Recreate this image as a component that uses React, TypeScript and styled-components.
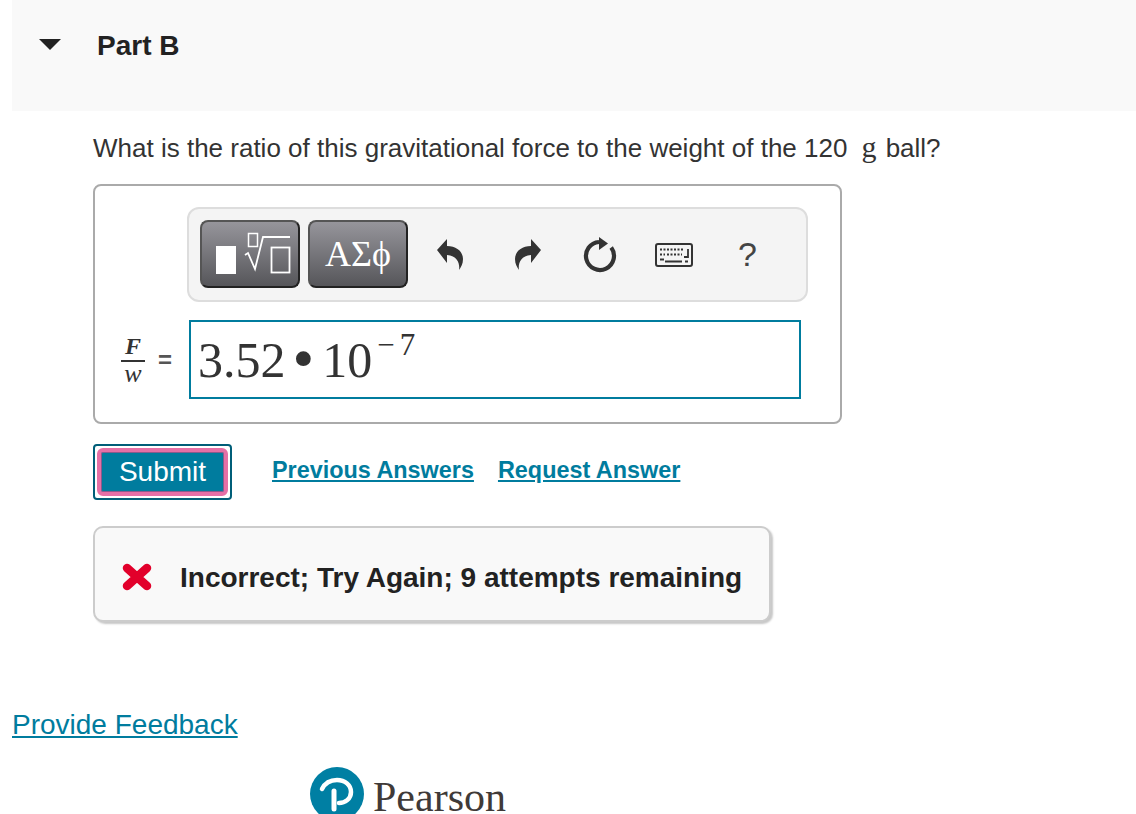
import styled, { createGlobalStyle } from 'styled-components'

const GlobalStyle = createGlobalStyle`
  html, body {
    margin: 0;
    padding: 0;
    background: #fff;
  }
  body {
    font-family: 'Liberation Sans', Arial, sans-serif;
    color: #333;
  }
`

const Page = styled.div`
  width: 1136px;
  height: 814px;
  overflow: hidden;
  box-sizing: border-box;
  padding-left: 12px;
`

const PartHeader = styled.div`
  display: flex;
  align-items: flex-start;
  height: 111px;
  background: #f9f9f9;
  box-sizing: border-box;
  padding: 30px 0 0 27px;
`

const Caret = styled.svg`
  width: 22px;
  height: 11px;
  margin-top: 9px;
  margin-right: 36px;
`

const PartTitle = styled.h2`
  margin: 1px 0 0;
  font-size: 28px;
  line-height: 30px;
  font-weight: 700;
  color: #222;
`

const Body = styled.div`
  padding: 20px 0 0 81px;
`

const Question = styled.p`
  margin: 0;
  font-size: 26px;
  line-height: 34px;
  color: #333;
  white-space: nowrap;
`

const Unit = styled.span`
  font-family: 'Liberation Serif', serif;
  font-size: 30px;
  line-height: 30px;
  margin: 0 2px 0 14px;
`

const AnswerBox = styled.div`
  width: 749px;
  height: 240px;
  margin-top: 19px;
  box-sizing: border-box;
  border: 2px solid #aaa;
  border-radius: 8px;
  padding: 21px 0 0 92px;
`

const Toolbar = styled.div`
  display: flex;
  align-items: center;
  width: 621px;
  height: 95px;
  box-sizing: border-box;
  border: 2px solid #ddd;
  border-radius: 12px;
  background: #f4f4f4;
  padding: 0 0 0 11px;
`

const TemplateButton = styled.div`
  display: flex;
  align-items: center;
  justify-content: center;
  width: 100px;
  height: 68px;
  margin: -1px 8px 0 0;
  box-sizing: border-box;
  border: 2px solid #222;
  border-top-color: #555;
  border-left-color: #555;
  border-radius: 8px;
  background: linear-gradient(#96959b, #56565a);
  color: #fff;
  font-family: 'Liberation Serif', serif;
  font-size: 36px;
`

const ToolIcon = styled.svg<{ $left: number }>`
  flex: none;
  margin-left: ${(p) => p.$left}px;
  color: #333;
`

const HelpMark = styled.span`
  margin-left: 45px;
  font-size: 34px;
  color: #444;
`

const MathRow = styled.div`
  display: flex;
  align-items: center;
  margin: 18px 0 0 -66px;
`

const Fraction = styled.div`
  display: flex;
  flex-direction: column;
  align-items: center;
  width: 24px;
  font-family: 'Liberation Serif', serif;
  font-style: italic;
  font-size: 26px;
  line-height: 24px;
  color: #333;
`

const FractionTop = styled.span`
  font-weight: 700;
  font-size: 24px;
  width: 100%;
  text-align: center;
  border-bottom: 2px solid #333;
  padding-bottom: 2px;
`

const Equals = styled.span`
  width: 46px;
  padding-left: 13px;
  box-sizing: border-box;
  font-size: 24px;
  font-weight: 700;
  color: #555;
`

const MathInput = styled.div`
  width: 612px;
  height: 79px;
  box-sizing: border-box;
  border: 2px solid #007c9e;
  padding: 0 0 0 7px;
  margin-left: -2px;
  display: flex;
  align-items: flex-start;
  font-family: 'Liberation Serif', serif;
  font-size: 50px;
  line-height: 76px;
  color: #333;
`

const Dot = styled.span`
  font-size: 62px;
  line-height: 72px;
  margin: 0 8px 0 7px;
`

const Exponent = styled.span`
  font-size: 31px;
  line-height: 46px;
  margin-left: 5px;
`

const ExponentSign = styled.span`
  font-weight: 400;
  margin-right: 5px;
`

const ActionRow = styled.div`
  display: flex;
  align-items: center;
  margin-top: 20px;
`

const SubmitButton = styled.button`
  width: 139px;
  height: 56px;
  box-sizing: border-box;
  border: 2px solid #005e78;
  border-radius: 4px;
  background: #fff;
  padding: 2px;
  margin-right: 40px;
`

const SubmitFace = styled.span`
  display: flex;
  align-items: center;
  justify-content: center;
  height: 100%;
  box-sizing: border-box;
  border: 4px solid #e570a6;
  border-radius: 6px;
  background: #007c9e;
  box-shadow: inset 0 0 0 1px #8c5a8c;
  color: #fff;
  font-family: 'Liberation Sans', Arial, sans-serif;
  font-size: 28px;
`

const ActionLink = styled.a`
  font-size: 23.4px;
  font-weight: 700;
  color: #007c9e;
  text-decoration: underline;
  margin: 0 24px 4px 0;
  cursor: pointer;
`

const FeedbackBox = styled.div`
  display: flex;
  align-items: center;
  width: 678px;
  height: 96px;
  margin-top: 26px;
  box-sizing: border-box;
  border: 2px solid #ccc;
  border-radius: 10px;
  background: #f9f9f9;
  box-shadow: 2px 2px 2px #c8c8c8;
  padding: 6px 0 0 27px;
`

const WrongMark = styled.svg`
  width: 30px;
  height: 28px;
  margin-right: 28px;
`

const FeedbackText = styled.span`
  font-size: 28px;
  font-weight: 700;
  color: #222;
  margin-top: 2px;
`

const ProvideFeedback = styled.a`
  display: block;
  margin-top: 87px;
  width: fit-content;
  font-size: 28px;
  line-height: 32px;
  color: #007c9e;
  text-decoration: underline;
  cursor: pointer;
`

const Brand = styled.div`
  display: flex;
  align-items: flex-start;
  margin: 26px 0 0 298px;
`

const BrandMark = styled.svg`
  flex: none;
  width: 54px;
  height: 54px;
  margin-right: 9px;
`

const BrandName = styled.span`
  font-family: 'Liberation Serif', serif;
  font-size: 42px;
  line-height: 34px;
  margin-top: 13px;
  color: #3f3a38;
`

const App = () => {
  return (
    <Page>
      <GlobalStyle />
      <PartHeader>
        <Caret viewBox="0 0 22 11">
          <path d="M0 0h22L11 11z" fill="#222" />
        </Caret>
        <PartTitle>Part B</PartTitle>
      </PartHeader>
      <Body>
        <Question>
          What is the ratio of this gravitational force to the weight of the 120
          <Unit>g</Unit> ball?
        </Question>
        <AnswerBox>
          <Toolbar>
            <TemplateButton>
              <svg width="84" height="50" viewBox="0 0 84 50" fill="none" stroke="#fff">
                <rect x="8" y="17" width="20" height="28" fill="#fff" stroke="none" />
                <rect x="40.500" y="4.500" width="9" height="13" strokeWidth="1.500" />
                <path d="M37 26l3-2 7 16 8-32h27" strokeWidth="1.800" />
                <rect x="63.500" y="18.500" width="18" height="25" strokeWidth="1.800" />
              </svg>
            </TemplateButton>
            <TemplateButton>ΑΣϕ</TemplateButton>
            <ToolIcon $left={21} width="28" height="32" viewBox="0 0 28 32">
              <path d="M0 11 10 0v7c10 0 16 6 16 13 0 5-2 8-4 11 1-6-1-14-12-15v8z" fill="currentColor" />
            </ToolIcon>
            <ToolIcon $left={48} width="28" height="32" viewBox="0 0 28 32">
              <path d="M28 11 18 0v7C8 7 2 13 2 20c0 5 2 8 4 11-1-6 1-14 12-15v8z" fill="currentColor" />
            </ToolIcon>
            <ToolIcon $left={42} width="34" height="37" viewBox="0 0 34 37">
              <path d="M16 6A14 14 0 1 0 28.200 11.600" fill="none" stroke="currentColor" strokeWidth="4.200" />
              <path d="M16 1l9 6.500-9 6.500z" fill="currentColor" />
            </ToolIcon>
            <ToolIcon $left={38} width="38" height="24" viewBox="0 0 38 24">
              <rect x="1" y="1" width="36" height="22" rx="2" fill="#f4f4f4" stroke="currentColor" strokeWidth="2" />
              <path d="M5 6.500h24M5 11.500h5M12 11.500h15" stroke="currentColor" strokeWidth="2" strokeDasharray="2 1.500" />
              <path d="M5 16.500h4M10 18.500h17M30 18.500h3M33 6v8h-4" stroke="currentColor" strokeWidth="1.800" fill="none" />
            </ToolIcon>
            <HelpMark>?</HelpMark>
          </Toolbar>
          <MathRow>
            <Fraction>
              <FractionTop>F</FractionTop>
              <span>w</span>
            </Fraction>
            <Equals>=</Equals>
            <MathInput>
              3.52<Dot>•</Dot>10
              <Exponent>
                <ExponentSign>−</ExponentSign>7
              </Exponent>
            </MathInput>
          </MathRow>
        </AnswerBox>
        <ActionRow>
          <SubmitButton>
            <SubmitFace>Submit</SubmitFace>
          </SubmitButton>
          <ActionLink>Previous Answers</ActionLink>
          <ActionLink>Request Answer</ActionLink>
        </ActionRow>
        <FeedbackBox>
          <WrongMark viewBox="0 0 30 28">
            <path d="M5 5 25 23M25 5 5 23" stroke="#e2002b" strokeWidth="8.500" strokeLinecap="round" />
          </WrongMark>
          <FeedbackText>Incorrect; Try Again; 9 attempts remaining</FeedbackText>
        </FeedbackBox>
      </Body>
      <ProvideFeedback>Provide Feedback</ProvideFeedback>
      <Brand>
        <BrandMark viewBox="0 0 54 54">
          <circle cx="27" cy="27" r="27" fill="#007fa3" />
          <path d="M12 22C15 16 21 13 27 13 35 13 41 18 41 25 41 32 35 36 29 36" fill="none" stroke="#fff" strokeWidth="4.500" strokeLinecap="round" />
          <path d="M24 24V42" stroke="#fff" strokeWidth="5" strokeLinecap="round" />
        </BrandMark>
        <BrandName>Pearson</BrandName>
      </Brand>
    </Page>
  )
}

export default App
